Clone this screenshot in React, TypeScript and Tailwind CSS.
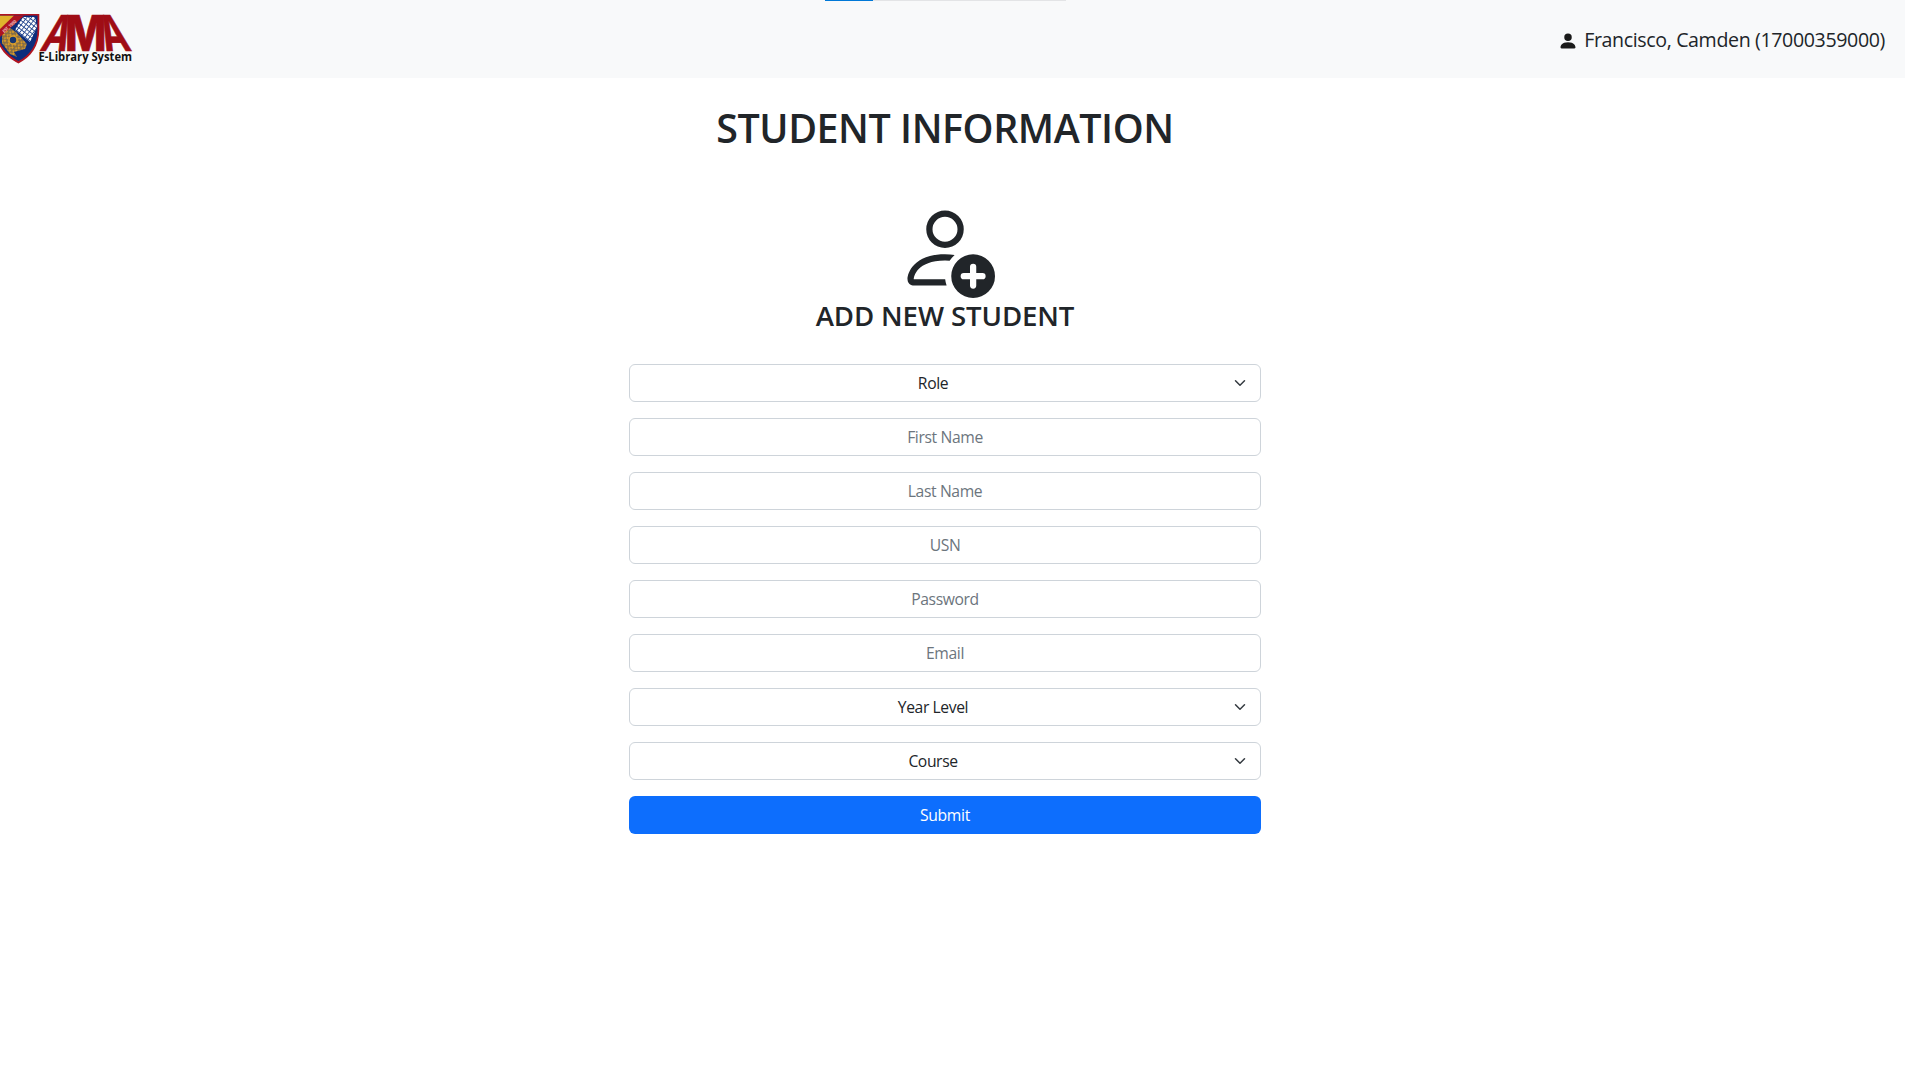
import { BsPersonAdd, BsPersonFill } from "react-icons/bs";

type Field = { label: string; kind: "input" | "select" };

const fields: Field[] = [
  { label: "Role", kind: "select" },
  { label: "First Name", kind: "input" },
  { label: "Last Name", kind: "input" },
  { label: "USN", kind: "input" },
  { label: "Password", kind: "input" },
  { label: "Email", kind: "input" },
  { label: "Year Level", kind: "select" },
  { label: "Course", kind: "select" },
];

function Logo() {
  return (
    <svg width="160" height="78" viewBox="0 0 160 78" className="block overflow-visible">
      <defs>
        <clipPath id="shield">
          <path d="M-3 15.500H37.500V30C37.500 45 29.500 55.500 18.500 61C8 56 -1 46 -3 33Z" />
        </clipPath>
        <pattern id="checks" width="3.600" height="3.600" patternUnits="userSpaceOnUse" patternTransform="rotate(38)">
          <rect width="3.600" height="3.600" fill="#2c4d93" />
          <rect width="2.700" height="2.700" fill="#ffffff" />
        </pattern>
        <pattern id="circuit" width="5" height="4" patternUnits="userSpaceOnUse" patternTransform="rotate(42)">
          <rect width="5" height="4" fill="#d89b28" />
          <path d="M0 1H3.500M2 3H5" stroke="#263a69" strokeWidth="0.900" />
        </pattern>
      </defs>
      <path d="M-4 14H39.300V29C39.300 46 31 57 18.500 63.500C7 58 -3 48 -4 32Z" fill="#b01420" />
      <g clipPath="url(#shield)">
        <rect x="-4" y="14" width="44" height="50" fill="#0b2c7c" />
        <path d="M23 17L35 17L37 27L30 42L15 30Z" fill="url(#checks)" />
        <path d="M3 31L10 28L16 32L27 44L25 49L14 52L17 57L10 54L2 43V34Z" fill="url(#circuit)" />
        <circle cx="13" cy="40" r="4" fill="#17366f" stroke="#dca02b" strokeWidth="1.500" />
        <path d="M-4 14H26L0 37L-4 35Z" fill="#ae1420" />
        <path d="M0 15.500H14L0 29Z" fill="#dfb32d" />
      </g>
      <text transform="translate(10.500 27.500) rotate(-42)" fontFamily="Open Sans, sans-serif" fontSize="4.500" fontWeight="700" fill="#e9b5b0" textAnchor="middle" textLength="17">
        EST. 1980
      </text>
      <g fill="#9f0d15" stroke="#9f0d15" strokeWidth="0.700" fontFamily="Inter, sans-serif" fontWeight="700" fontSize="49.500">
        <text transform="translate(39 50.500) skewX(-19)" textLength="26.500" lengthAdjust="spacingAndGlyphs">A</text>
        <text transform="translate(65 50.500)" textLength="41.500" lengthAdjust="spacingAndGlyphs" fontWeight="800">M</text>
        <text transform="translate(106 50.500) skewX(19)" textLength="26.500" lengthAdjust="spacingAndGlyphs">A</text>
      </g>
      <text x="38.500" y="61.300" fontFamily="Open Sans, sans-serif" fontSize="12" fontWeight="700" fill="#101010" textLength="93.500" lengthAdjust="spacingAndGlyphs">
        E-Library System
      </text>
    </svg>
  );
}

function FormField({ field }: { field: Field }) {
  if (field.kind === "input") {
    return (
      <input
        placeholder={field.label}
        className="block h-[38px] w-full rounded-md border border-[#ced4da] bg-white px-3 text-center text-[15.700px] tracking-[-0.38px] text-[#212529] placeholder:text-[#6c757d]"
      />
    );
  }
  return (
    <div className="relative">
      <select className="block h-[38px] w-full appearance-none rounded-md border border-[#ced4da] bg-white pt-px pr-9 pl-3 text-center text-[15.700px] tracking-[-0.4px] text-[#212529]">
        <option>{field.label}</option>
      </select>
      <svg viewBox="0 0 16 16" className="pointer-events-none absolute top-[13px] right-[13px] h-3 w-4">
        <path d="m2 5 6 6 6-6" fill="none" stroke="#343a40" strokeWidth="2" strokeLinecap="round" strokeLinejoin="round" />
      </svg>
    </div>
  );
}

export default function App() {
  return (
    <div className="min-h-screen bg-white font-['Open_Sans','Noto_Sans',sans-serif] text-[#212529]">
      <header className="relative flex h-[78px] items-center justify-between bg-[#f8f9fa]">
        <div className="absolute top-0 left-[825px] flex h-px w-[241px] bg-[#e3e4e6]">
          <div className="h-px w-12 bg-[#0078d7]" />
        </div>
        <Logo />
        <div className="flex items-center pr-5">
          <BsPersonFill className="mt-[5px] mr-[6px] size-5 text-[#1a1a1a]" />
          <span className="pt-[2px] text-[19.600px] tracking-[-0.37px] whitespace-nowrap">Francisco, Camden (17000359000)</span>
        </div>
      </header>
      <main className="flex w-[1890px] flex-col items-center">
        <h1 className="mt-[26px] text-[39.400px] leading-[48px] font-semibold tracking-[-0.45px] whitespace-nowrap">STUDENT INFORMATION</h1>
        <BsPersonAdd className="mt-[46px] size-[100px]" />
        <h2 className="text-[27.600px] leading-[34px] font-semibold tracking-[-0.1px] whitespace-nowrap">ADD NEW STUDENT</h2>
        <form className="mt-8 flex w-[632px] flex-col gap-4">
          {fields.map((field) => (
            <FormField key={field.label} field={field} />
          ))}
          <button type="button" className="h-[38px] rounded-md bg-[#0d6efd] pt-px text-[15.700px] tracking-[-0.3px] text-white">
            Submit
          </button>
        </form>
      </main>
    </div>
  );
}
